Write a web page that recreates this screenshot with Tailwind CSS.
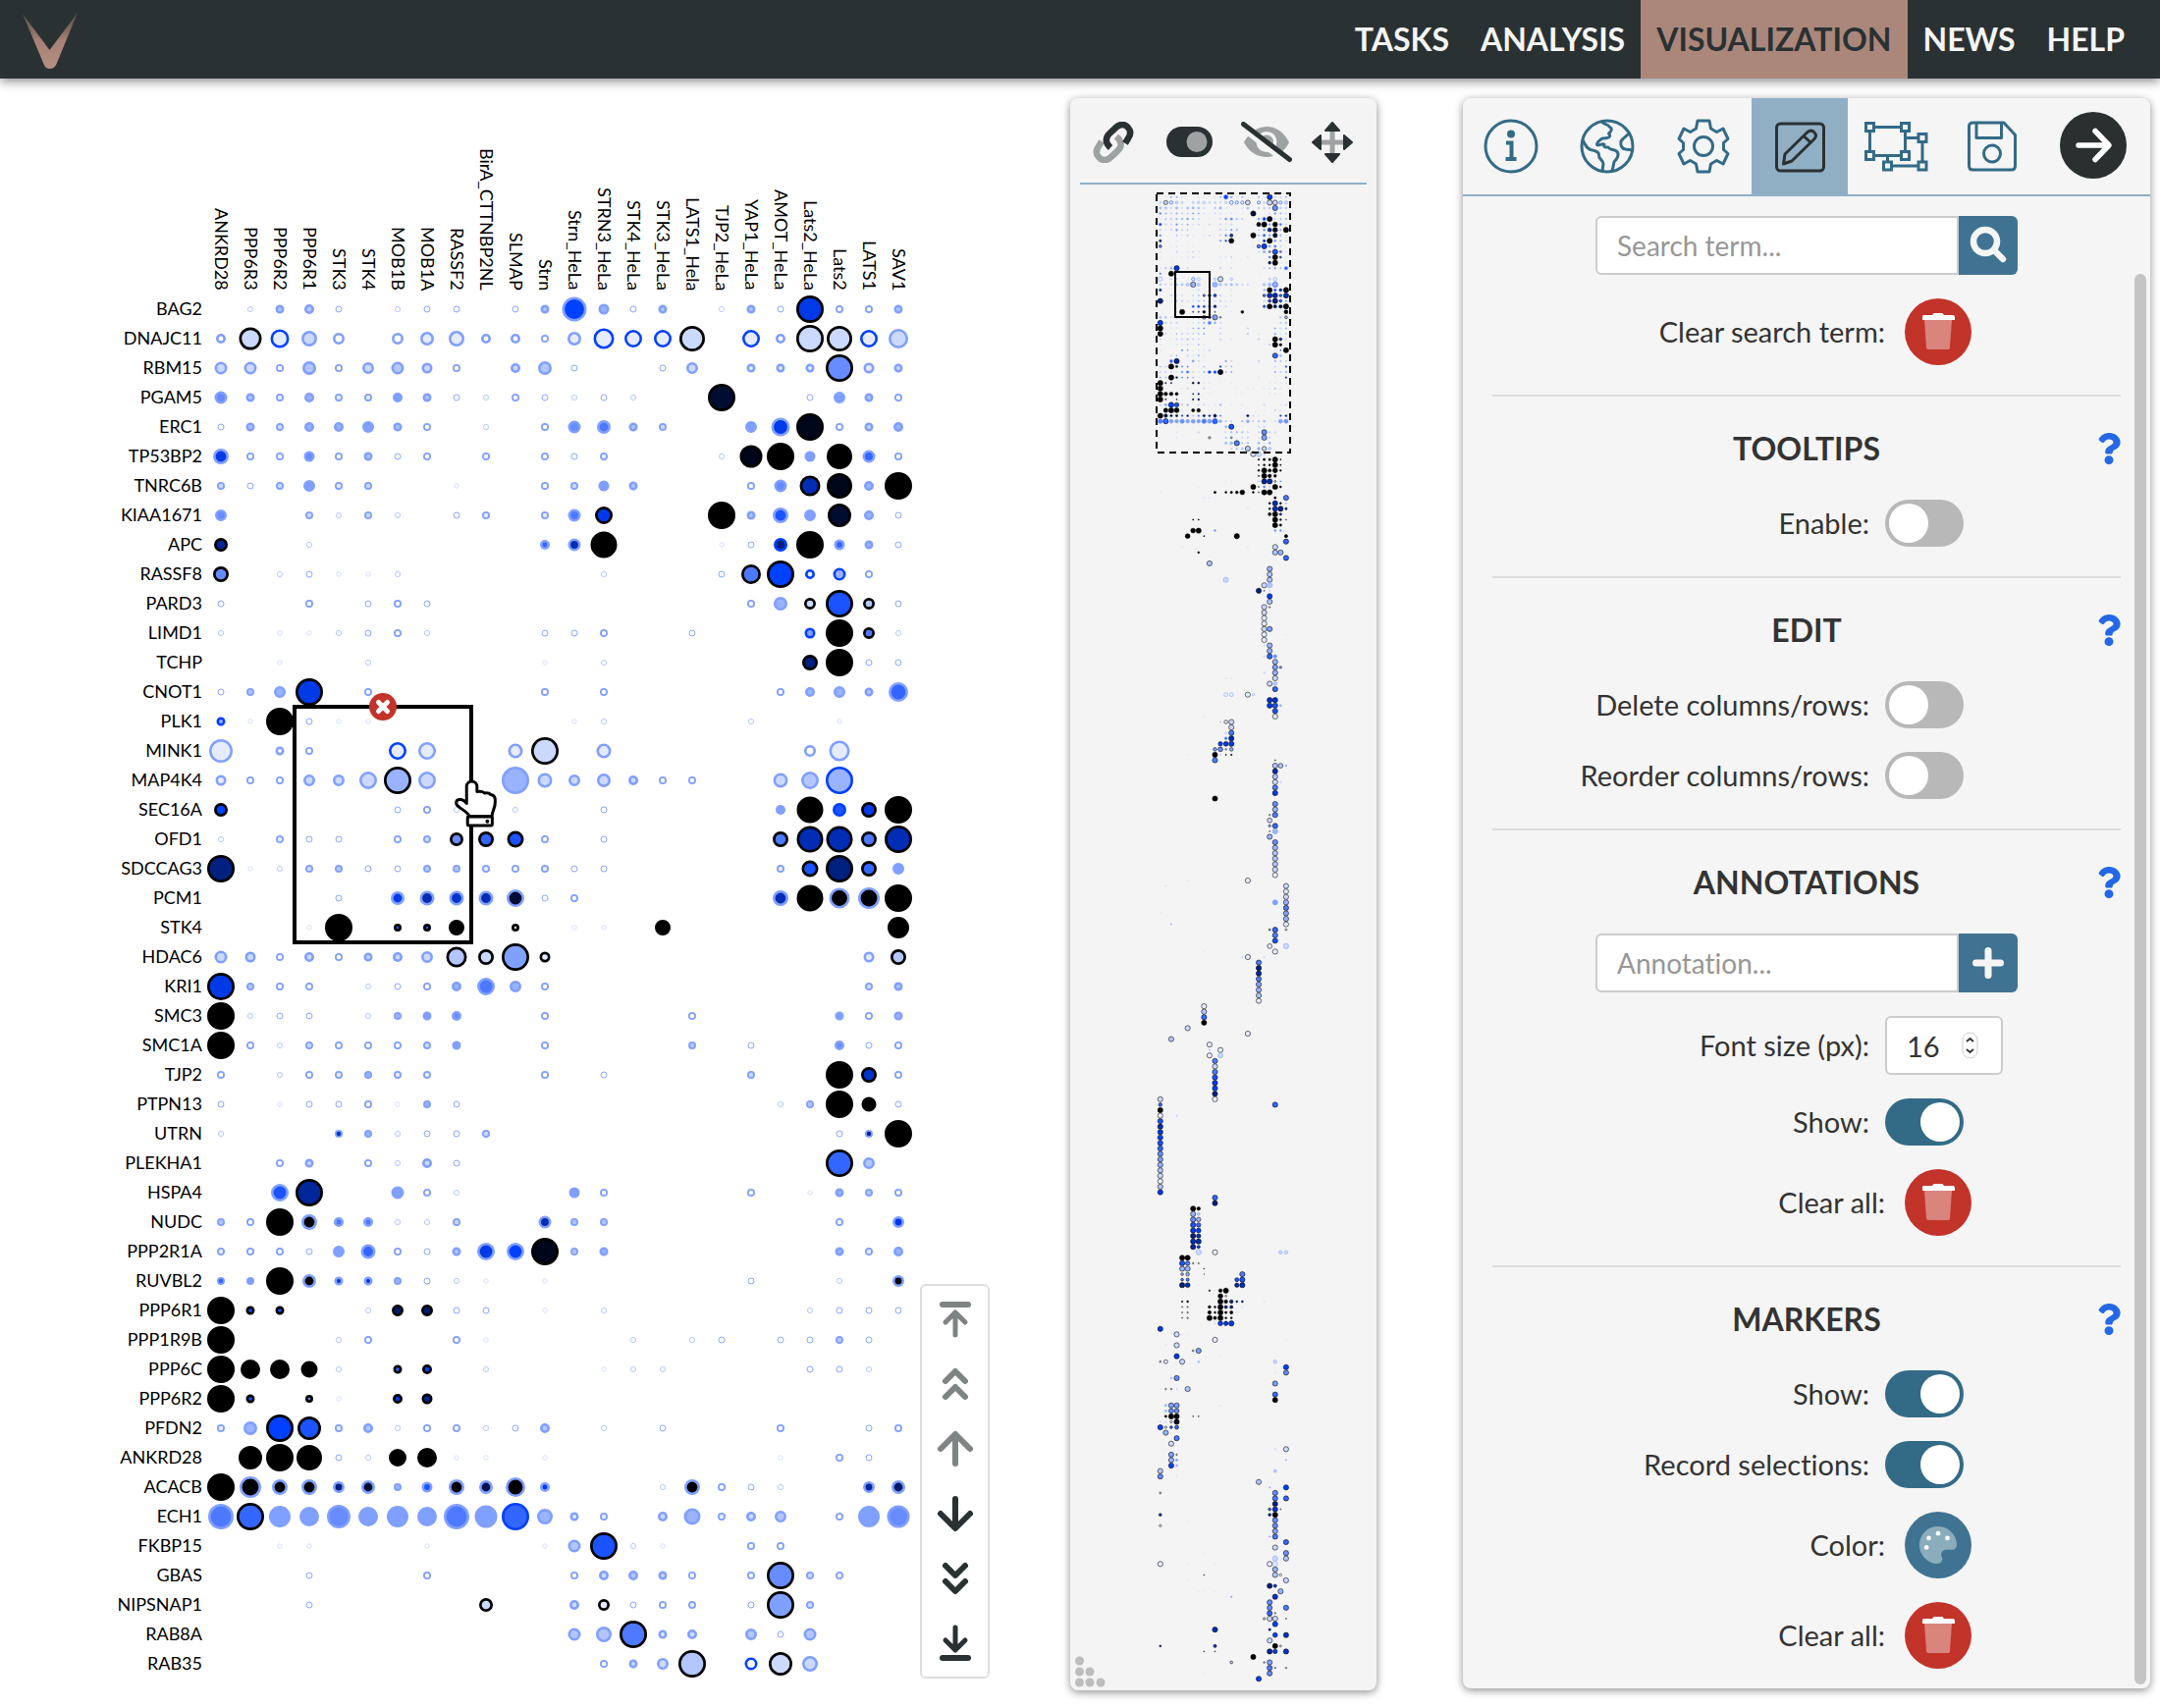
<!DOCTYPE html>
<html lang="en">
<head>
<meta charset="utf-8">
<title>Visualization</title>
<script src="https://cdn.jsdelivr.net/npm/@tailwindcss/browser@4"></script>
</head>
<body class="min-h-screen bg-white font-['Lato',sans-serif] text-[#333] [font-variant-ligatures:none]">

<header class="flex h-20 items-center justify-between bg-[#2a3132] pr-5 pl-5 shadow-[0_3px_10px_rgba(0,0,0,0.45)]">
  <a href="#" aria-label="Home" class="block">
    <svg width="62" height="60" viewBox="0 0 62 60">
      <defs><linearGradient id="lg" x1="0" y1="0" x2="0" y2="1"><stop offset="0" stop-color="#4d4a49"/><stop offset=".5" stop-color="#a78175"/><stop offset="1" stop-color="#b58f84"/></linearGradient></defs>
      <path fill="url(#lg)" d="M3 4 L30.500 41 L59 3 L38 54 Q36 60 30.500 60 Q26 60 24 54 Z"/>
    </svg>
  </a>
  <nav class="flex h-full text-[32px] font-bold text-[#f5f5f5]">
    <a href="#" class="flex items-center px-4">TASKS</a>
    <a href="#" class="flex items-center px-4">ANALYSIS</a>
    <a href="#" aria-current="page" class="flex items-center bg-[#ab877b] px-4 text-[#2a3132]">VISUALIZATION</a>
    <a href="#" class="flex items-center px-4">NEWS</a>
    <a href="#" class="flex items-center px-4">HELP</a>
  </nav>
</header>

<main class="flex items-start pt-5 pr-[10px]">

  <section aria-label="Dot plot" class="flex flex-1 items-end justify-end pr-[82px]">
    <div class="grid grid-cols-[auto_720px] gap-x-1">
      <div></div>
      <div id="cols" class="flex h-[196px] items-end pl-px text-[18px] text-black"></div>
      <div id="rows" class="pt-[3px] text-right text-[18px] leading-[30px] text-black"></div>
      <div class="relative pt-1">
        <svg id="plot" width="720" height="1410" viewBox="0 0 720 1410" class="block"></svg>
        <button aria-label="Remove marker" class="absolute top-[410px] left-[166px] size-7 rounded-full bg-[#c23329]">
          <svg viewBox="0 0 28 28" class="block size-7"><path d="M9.500 9.500 L18.500 18.500 M18.500 9.500 L9.500 18.500" stroke="#fff" stroke-width="5" stroke-linecap="round"/></svg>
        </button>
        <svg class="absolute top-[497px] left-[252px]" width="45" height="51" viewBox="0 0 136 152" fill="#fff" stroke="#000" stroke-width="9" stroke-linejoin="round">
          <path d="M40 76 V24 a16 16 0 0 1 32 0 V40 C82 38 90 40 96 44 C106 43 112 46 114 49 C124 50 129 56 128 70 C129 92 118 98 118 116 H48 C46 104 30 98 16 86 C2 76 8 62 22 64 C30 65 36 70 40 76Z"/>
          <rect x="43" y="117" width="76" height="27" rx="3"/><circle cx="104" cy="131" r="3" stroke-width="6"/>
        </svg>
      </div>
    </div>
    <div class="ml-[7px] w-[71px] rounded-md border-2 border-[#dedede] bg-white py-px text-[#2a3132]">
      <button aria-label="First page" class="flex h-[66px] w-full items-center justify-center text-[#7f8383]"><svg width="40" height="40" fill="none" stroke="currentColor" stroke-width="5" stroke-linecap="round" stroke-linejoin="round"><path stroke-width="6" d="M7 5 H33"/><path d="M10 23 L20 13 L30 23 M20 14 V36"/></svg></button>
      <button aria-label="Page up" class="flex h-[66px] w-full items-center justify-center text-[#7f8383]"><svg width="40" height="40" fill="none" stroke="currentColor" stroke-width="6" stroke-linecap="round" stroke-linejoin="round"><path d="M10 17 L20 7 L30 17 M10 33 L20 23 L30 33"/></svg></button>
      <button aria-label="Row up" class="flex h-[66px] w-full items-center justify-center text-[#7f8383]"><svg width="40" height="40" fill="none" stroke="currentColor" stroke-width="6" stroke-linecap="round" stroke-linejoin="round"><path d="M5 20 L20 5 L35 20 M20 6 V35"/></svg></button>
      <button aria-label="Row down" class="flex h-[66px] w-full items-center justify-center"><svg width="40" height="40" fill="none" stroke="currentColor" stroke-width="6" stroke-linecap="round" stroke-linejoin="round"><path d="M5 20 L20 35 L35 20 M20 5 V34"/></svg></button>
      <button aria-label="Page down" class="flex h-[66px] w-full items-center justify-center"><svg width="40" height="40" fill="none" stroke="currentColor" stroke-width="6" stroke-linecap="round" stroke-linejoin="round"><path d="M10 7 L20 17 L30 7 M10 23 L20 33 L30 23"/></svg></button>
      <button aria-label="Last page" class="flex h-[66px] w-full items-center justify-center"><svg width="40" height="40" fill="none" stroke="currentColor" stroke-width="5" stroke-linecap="round" stroke-linejoin="round"><path stroke-width="6" d="M7 35 H33"/><path d="M10 17 L20 27 L30 17 M20 4 V26"/></svg></button>
    </div>
  </section>

  <section aria-label="Minimap" class="relative w-[312px] rounded-lg bg-[#f4f4f4] px-[10px] pb-2 shadow-[0_2px_8px_rgba(0,0,0,0.45)]">
    <div class="flex h-[88px] items-center border-b-2 border-[#90afc5] px-3 pt-1">
      <button aria-label="Sync"><svg width="44" height="42" viewBox="0 0 42 42" fill="none" stroke-width="6.500" stroke-linecap="butt"><path stroke="#9ea2a2" d="M24 15 C30 20 30 26 25 30 L18 36.500 C14 40 9 40 6 36 C3 32.500 3 29 6 25 L9 20"/><path stroke="#2a3132" d="M18 26.500 C12 21 13 16 17 12 L24 5.500 C28 2 33 2 36 6 C39 9.500 39 13 36 17 L33 22"/></svg></button>
      <button aria-label="Toggle map" class="ml-8"><svg width="48" height="42" viewBox="0 0 48 42"><rect y="5" width="47" height="31" rx="15.500" fill="#2a3132"/><circle cx="31" cy="20.500" r="10.500" fill="#9ea2a2"/></svg></button>
      <button aria-label="Hide map" class="ml-7"><svg width="52" height="42" viewBox="0 0 52 42"><path fill="#9ea2a2" d="M3 21 C9 10 18 5 26 5 C36 5 44 11 49 21 C44 31 36 36 26 36 C17 36 8 31 3 21Z"/><circle cx="26" cy="20.500" r="10.500" fill="#f4f4f4"/><circle cx="26" cy="20.500" r="7" fill="#9ea2a2"/><path d="M0 6 L46 42" stroke="#f4f4f4" stroke-width="5"/><path d="M2.500 2.500 L49.500 38.500" stroke="#2a3132" stroke-width="5" stroke-linecap="round"/></svg></button>
      <button aria-label="Move map" class="ml-5"><svg width="42" height="42" viewBox="0 0 42 42"><path d="M21 8 V34 M8 21 H34" stroke="#9ea2a2" stroke-width="5"/><g fill="#2a3132" stroke="#2a3132" stroke-width="2" stroke-linejoin="round"><path d="M21 1 L28 9 H14Z"/><path d="M21 41 L28 33 H14Z"/><path d="M1 21 L9 14 V28Z"/><path d="M41 21 L33 14 V28Z"/></g></svg></button>
    </div>
    <svg id="mini" width="142" height="1526" viewBox="0 0 142 1526" class="mx-auto block"></svg>
    <svg class="absolute bottom-[3px] left-1" width="32" height="32" fill="#bdbdbd"><circle cx="5.500" cy="5" r="4.500"/><circle cx="5.500" cy="16" r="4.500"/><circle cx="16" cy="16" r="4.500"/><circle cx="5.500" cy="27" r="4.500"/><circle cx="16" cy="27" r="4.500"/><circle cx="27" cy="27" r="4.500"/></svg>
  </section>

  <section aria-label="Settings" class="relative ml-[88px] w-[700px] rounded-lg bg-[#f5f5f5] text-[29px] shadow-[0_2px_8px_rgba(0,0,0,0.45)]">
    <div class="flex h-[100px] border-b-2 border-[#90afc5] text-[#336b87]">
      <button aria-label="Information" class="flex w-[98px] items-center justify-center"><svg width="56" height="56" viewBox="0 0 56 56" fill="none" stroke="currentColor" stroke-width="3"><circle cx="28" cy="28" r="26"/><circle cx="28" cy="15.500" r="4" fill="currentColor" stroke="none"/><path stroke-width="4" d="M23 24.500 H28.500 V41 M22.500 41 H33.500"/></svg></button>
      <button aria-label="External" class="flex w-[98px] items-center justify-center"><svg width="56" height="56" viewBox="0 0 56 56" fill="none" stroke="currentColor" stroke-width="3" stroke-linejoin="round"><circle cx="28" cy="28" r="26"/><path d="M3 22 C6 26 6 30 11 31.500 C16 32.500 20 34 19.500 37 C19 41 24 42 24 46 L23 53.500"/><path d="M22.500 2 C23 6 29 5 30 8 C34 10 32 13 29.500 15 C33 19 28 20 23 20 C20 22 17 24 17.500 26.500 C20 28 22 24.500 25 26 C24 29 26 29 29 29 C31 32 34 31 37.500 33 C41 36 38 41 35 44 C34 48 34 51 32.500 53.500"/><path d="M51 14 C49 17 44 19 42 23 C41 27 43 31 47 31 C49 32 51 31 54 32"/></svg></button>
      <button aria-label="Options" class="flex w-[98px] items-center justify-center"><svg width="56" height="56" viewBox="-28 -28 56 56" fill="none" stroke="currentColor" stroke-width="3" stroke-linejoin="round"><circle r="9.500"/><path d="M-6 -26 H6 L7.500 -18 L13.500 -14.500 L20 -18 L25 -7.500 L20.500 -3.500 V3.500 L25 7.500 L20 18 L13.500 14.500 L7.500 18 L6 26 H-6 L-7.500 18 L-13.500 14.500 L-20 18 L-25 7.500 L-20.500 3.500 V-3.500 L-25 -7.500 L-20 -18 L-13.500 -14.500 L-7.500 -18Z"/></svg></button>
      <button aria-label="Edit" class="flex h-[100px] w-[98px] items-center justify-center bg-[#90afc5] text-[#2a3132]"><svg width="56" height="56" viewBox="-28 -28 56 56" fill="none" stroke="currentColor" stroke-width="3" stroke-linejoin="round"><rect x="-23.500" y="-24" width="48" height="48" rx="4"/><path d="M-16.500 17 L-15 7 L8 -15.500 Q12 -18.500 15 -15 Q18 -12 15 -8.500 L-8 14 Z M4 -11.500 L11.500 -4.500"/></svg></button>
      <button aria-label="Group" class="flex w-[98px] items-center justify-center"><svg width="66" height="56" viewBox="-33 -28 66 56" fill="none" stroke="currentColor" stroke-width="3"><path d="M-22 -19.500 H5 M-22 9.500 H5 M-26.500 -15 V5 M9.500 -15 V5 M9.500 -8.500 H22 M27 -4 V15 M-4 20 H22 M-8.500 10 V15"/><rect x="-30.500" y="-23.500" width="8" height="8"/><rect x="5.500" y="-23.500" width="8" height="8"/><rect x="-30.500" y="5.500" width="8" height="8"/><rect x="5.500" y="5.500" width="8" height="8"/><rect x="23" y="-12.500" width="8" height="8"/><rect x="23" y="16" width="8" height="8"/><rect x="-12.500" y="16" width="8" height="8"/></svg></button>
      <button aria-label="Save" class="flex w-[98px] items-center justify-center"><svg width="56" height="56" viewBox="-28 -28 56 56" fill="none" stroke="currentColor" stroke-width="3" stroke-linejoin="round"><path d="M-20 -24 H12 L23.500 -11.500 V20 Q23.500 24 19.500 24 H-19.500 Q-23.500 24 -23.500 20 V-20 Q-23.500 -24 -19.500 -24"/><path d="M-16 -24 V-8.500 H9.500 V-24"/><circle cy="7.500" r="8.500"/></svg></button>
      <div class="flex flex-1 items-center justify-center pr-1 pb-0.5"><button aria-label="Close panel" class="size-[68px] rounded-full bg-[#2a2f2f]"><svg viewBox="-34 -34 68 68" fill="none" stroke="#fff" stroke-width="5.500" stroke-linecap="round" stroke-linejoin="round"><path d="M-15 0 H15 M2 -14.500 L16 0 L2 14.500"/></svg></button></div>
    </div>

    <div class="px-[30px] pt-5 pb-5">
      <div class="space-y-6 pb-[30px]">
        <div class="mx-auto flex w-[430px]">
          <input type="text" aria-label="Search term" placeholder="Search term..." class="h-[60px] min-w-0 flex-1 rounded-l-md border-2 border-[#ccc] bg-white px-5 text-[28px] placeholder:text-[#979797]">
          <button aria-label="Search" class="size-[60px] rounded-r-md bg-[#3f7391]"><svg viewBox="0 0 60 60" fill="none" stroke="#f5f5f5" stroke-width="6.500" stroke-linecap="round"><circle cx="27" cy="26" r="12"/><path d="M36 35 L45 44"/></svg></button>
        </div>
        <div class="flex h-[68px] items-center gap-5">
          <label for="clr1" class="w-[400px] text-right">Clear search term:</label>
          <button id="clr1" class="size-[68px] rounded-full bg-[#c23329]"><svg viewBox="-34 -34 68 68" fill="#fff"><path opacity=".4" d="M-14 -12 H14 L12 16 Q12 18 10 18 H-10 Q-12 18 -12 16Z"/><path d="M-15 -17 H-6 L-4.500 -19 H4.500 L6 -17 H15 Q17 -17 17 -15 V-12 H-16 V-15 Q-16 -17 -15 -17Z"/></svg></button>
        </div>
      </div>

      <section class="border-t-2 border-[#ddd] pt-[30px] pb-[30px]">
        <div class="relative mb-[29px] flex h-[46px] items-center justify-center">
          <h2 class="text-[32px] font-bold">TOOLTIPS</h2>
          <button aria-label="Help" class="absolute right-0"><svg width="24" height="32" viewBox="0 0 384 512" fill="#2468e5"><path d="M202 0C122.200 0 70.500 32.700 29.900 91c-7.400 10.600-5.100 25.100 5.200 32.900l43.100 32.700c10.400 7.900 25.100 6 33.300-4.100 25-31.400 43.600-49.400 82.700-49.400 30.800 0 68.800 19.800 68.800 49.600 0 22.600-18.600 34.100-49 51.200-35.400 19.900-82.300 44.600-82.300 106.400V320c0 13.300 10.700 24 24 24h72.500c13.300 0 24-10.700 24-24v-5.800c0-42.900 125.300-44.600 125.300-160.600C377.500 66.300 286.900 0 202 0zM192 373.500a69.300 69.300 0 1 0 0 138.500a69.300 69.300 0 1 0 0-138.500z"/></svg></button>
        </div>
        <div class="flex h-12 items-center gap-4">
          <label for="tt" class="w-[384px] text-right">Enable:</label>
          <input id="tt" type="checkbox" role="switch" class="h-12 w-20 appearance-none rounded-full bg-[#b8b8b8] p-1 before:block before:size-10 before:rounded-full before:bg-white before:content-[''] checked:bg-[#336b87] checked:before:translate-x-8">
        </div>
      </section>

      <section class="border-t-2 border-[#ddd] pt-[30px] pb-[30px]">
        <div class="relative mb-[29px] flex h-[46px] items-center justify-center">
          <h2 class="text-[32px] font-bold">EDIT</h2>
          <button aria-label="Help" class="absolute right-0"><svg width="24" height="32" viewBox="0 0 384 512" fill="#2468e5"><path d="M202 0C122.200 0 70.500 32.700 29.900 91c-7.400 10.600-5.100 25.100 5.200 32.900l43.100 32.700c10.400 7.900 25.100 6 33.300-4.100 25-31.400 43.600-49.400 82.700-49.400 30.800 0 68.800 19.800 68.800 49.600 0 22.600-18.600 34.100-49 51.200-35.400 19.900-82.300 44.600-82.300 106.400V320c0 13.300 10.700 24 24 24h72.500c13.300 0 24-10.700 24-24v-5.800c0-42.900 125.300-44.600 125.300-160.600C377.500 66.300 286.900 0 202 0zM192 373.500a69.300 69.300 0 1 0 0 138.500a69.300 69.300 0 1 0 0-138.500z"/></svg></button>
        </div>
        <div class="space-y-6">
          <div class="flex h-12 items-center gap-4">
            <label for="del" class="w-[384px] text-right">Delete columns/rows:</label>
            <input id="del" type="checkbox" role="switch" class="h-12 w-20 appearance-none rounded-full bg-[#b8b8b8] p-1 before:block before:size-10 before:rounded-full before:bg-white before:content-[''] checked:bg-[#336b87] checked:before:translate-x-8">
          </div>
          <div class="flex h-12 items-center gap-4">
            <label for="reo" class="w-[384px] text-right">Reorder columns/rows:</label>
            <input id="reo" type="checkbox" role="switch" class="h-12 w-20 appearance-none rounded-full bg-[#b8b8b8] p-1 before:block before:size-10 before:rounded-full before:bg-white before:content-[''] checked:bg-[#336b87] checked:before:translate-x-8">
          </div>
        </div>
      </section>

      <section class="border-t-2 border-[#ddd] pt-[30px] pb-[30px]">
        <div class="relative mb-[29px] flex h-[46px] items-center justify-center">
          <h2 class="text-[32px] font-bold">ANNOTATIONS</h2>
          <button aria-label="Help" class="absolute right-0"><svg width="24" height="32" viewBox="0 0 384 512" fill="#2468e5"><path d="M202 0C122.200 0 70.500 32.700 29.900 91c-7.400 10.600-5.100 25.100 5.200 32.900l43.100 32.700c10.400 7.900 25.100 6 33.300-4.100 25-31.400 43.600-49.400 82.700-49.400 30.800 0 68.800 19.800 68.800 49.600 0 22.600-18.600 34.100-49 51.200-35.400 19.900-82.300 44.600-82.300 106.400V320c0 13.300 10.700 24 24 24h72.500c13.300 0 24-10.700 24-24v-5.800c0-42.900 125.300-44.600 125.300-160.600C377.500 66.300 286.900 0 202 0zM192 373.500a69.300 69.300 0 1 0 0 138.500a69.300 69.300 0 1 0 0-138.500z"/></svg></button>
        </div>
        <div class="space-y-6">
          <div class="mx-auto flex w-[430px]">
            <input type="text" aria-label="Annotation" placeholder="Annotation..." class="h-[60px] min-w-0 flex-1 rounded-l-md border-2 border-[#ccc] bg-white px-5 text-[28px] placeholder:text-[#979797]">
            <button aria-label="Add annotation" class="size-[60px] rounded-r-md bg-[#3f7391]"><svg viewBox="0 0 60 60" stroke="#f5f5f5" stroke-width="7" stroke-linecap="round"><path d="M17.500 30 H42.500 M30 17.500 V42.500"/></svg></button>
          </div>
          <div class="flex h-[60px] items-center gap-4">
            <label for="fs" class="w-[384px] text-right">Font size (px):</label>
            <div class="relative">
              <input id="fs" type="number" value="16" class="h-[60px] w-[120px] [appearance:textfield] rounded-md border-2 border-[#ccc] bg-white pl-5">
              <svg class="absolute top-4 left-[78px]" width="18" height="28" fill="#fff" stroke="#ccc"><rect x="1" y="1" width="15" height="26" rx="7.500"/><path fill="none" stroke="#333" stroke-width="2" d="M5 10 L8.500 7 L12 10 M5 18 L8.500 21 L12 18"/></svg>
            </div>
          </div>
          <div class="flex h-12 items-center gap-4">
            <label for="as" class="w-[384px] text-right">Show:</label>
            <input id="as" type="checkbox" role="switch" checked class="h-12 w-20 appearance-none rounded-full bg-[#b8b8b8] p-1 before:block before:size-10 before:rounded-full before:bg-white before:content-[''] checked:bg-[#336b87] checked:before:translate-x-8">
          </div>
          <div class="flex h-[68px] items-center gap-5">
            <label for="clr2" class="w-[400px] text-right">Clear all:</label>
            <button id="clr2" class="size-[68px] rounded-full bg-[#c23329]"><svg viewBox="-34 -34 68 68" fill="#fff"><path opacity=".4" d="M-14 -12 H14 L12 16 Q12 18 10 18 H-10 Q-12 18 -12 16Z"/><path d="M-15 -17 H-6 L-4.500 -19 H4.500 L6 -17 H15 Q17 -17 17 -15 V-12 H-16 V-15 Q-16 -17 -15 -17Z"/></svg></button>
          </div>
        </div>
      </section>

      <section class="border-t-2 border-[#ddd] pt-[30px]">
        <div class="relative mb-[29px] flex h-[46px] items-center justify-center">
          <h2 class="text-[32px] font-bold">MARKERS</h2>
          <button aria-label="Help" class="absolute right-0"><svg width="24" height="32" viewBox="0 0 384 512" fill="#2468e5"><path d="M202 0C122.200 0 70.500 32.700 29.900 91c-7.400 10.600-5.100 25.100 5.200 32.900l43.100 32.700c10.400 7.900 25.100 6 33.300-4.100 25-31.400 43.600-49.400 82.700-49.400 30.800 0 68.800 19.800 68.800 49.600 0 22.600-18.600 34.100-49 51.200-35.400 19.900-82.300 44.600-82.300 106.400V320c0 13.300 10.700 24 24 24h72.500c13.300 0 24-10.700 24-24v-5.800c0-42.900 125.300-44.600 125.300-160.600C377.500 66.300 286.900 0 202 0zM192 373.500a69.300 69.300 0 1 0 0 138.500a69.300 69.300 0 1 0 0-138.500z"/></svg></button>
        </div>
        <div class="space-y-6">
          <div class="flex h-12 items-center gap-4">
            <label for="ms" class="w-[384px] text-right">Show:</label>
            <input id="ms" type="checkbox" role="switch" checked class="h-12 w-20 appearance-none rounded-full bg-[#b8b8b8] p-1 before:block before:size-10 before:rounded-full before:bg-white before:content-[''] checked:bg-[#336b87] checked:before:translate-x-8">
          </div>
          <div class="flex h-12 items-center gap-4">
            <label for="rec" class="w-[384px] text-right">Record selections:</label>
            <input id="rec" type="checkbox" role="switch" checked class="h-12 w-20 appearance-none rounded-full bg-[#b8b8b8] p-1 before:block before:size-10 before:rounded-full before:bg-white before:content-[''] checked:bg-[#336b87] checked:before:translate-x-8">
          </div>
          <div class="flex h-[68px] items-center gap-5">
            <label for="col" class="w-[400px] text-right">Color:</label>
            <button id="col" class="flex size-[68px] items-center justify-center rounded-full bg-[#3f7391]"><svg width="38" height="38" viewBox="0 0 512 512"><path fill="#8aacbd" d="M204.300 5C104.900 24.400 24.800 104.300 5.200 203.400c-37 187 131.700 326.400 258.800 306.700 41.200-6.400 61.400-54.600 42.500-91.700-23.100-45.400 9.900-98.400 60.900-98.400h79.700c35.800 0 64.800-29.600 64.900-65.300C511.500 97.100 368.100-26.900 204.300 5z"/><g fill="#fff"><circle cx="96" cy="288" r="32"/><circle cx="128" cy="160" r="32"/><circle cx="256" cy="96" r="32"/><circle cx="384" cy="160" r="32"/></g></svg></button>
          </div>
          <div class="flex h-[68px] items-center gap-5">
            <label for="clr3" class="w-[400px] text-right">Clear all:</label>
            <button id="clr3" class="size-[68px] rounded-full bg-[#c23329]"><svg viewBox="-34 -34 68 68" fill="#fff"><path opacity=".4" d="M-14 -12 H14 L12 16 Q12 18 10 18 H-10 Q-12 18 -12 16Z"/><path d="M-15 -17 H-6 L-4.500 -19 H4.500 L6 -17 H15 Q17 -17 17 -15 V-12 H-16 V-15 Q-16 -17 -15 -17Z"/></svg></button>
          </div>
        </div>
      </section>
    </div>
    <div class="absolute top-[179px] right-1 bottom-1 w-3 rounded-full bg-[#c4c4c4]"></div>
  </section>
</main>

<script>
// Each dot is: column letter, edge (K = black, B = blue, none = light), diameter, "." fill level 0-20.
const columns = "ANKRD28 PPP6R3 PPP6R2 PPP6R1 STK3 STK4 MOB1B MOB1A RASSF2 BirA_CTTNBP2NL SLMAP Strn Strn_HeLa STRN3_HeLa STK4_HeLa STK3_HeLa LATS1_Hela TJP2_HeLa YAP1_HeLa AMOT_HeLa Lats2_HeLa Lats2 LATS1 SAV1".split(" ");
const rows = `BAG2 b6 c9.3 d10.3 e7 g6 h7 i7 k7 l9.3 m25.10 n11.4 o7 p9.3 r6 s9.3 t7 uK28.11 v8 w8 x9.3
DNAJC11 a10 bK23.2 cB19.1 d16.2 e12 g12 h14.1 i16.1 j10 k10 l8 m14.1 nB21.1 oB18.1 pB18.1 qK26.2 sB18.1 t10 uK28.2 vK26.2 wB18.1 x20.2
RBM15 a13.2 b13.2 c8 d14.3 e8 f12.2 g13.3 h11.2 i8 k10.2 l14.3 m7 p7 q12.2 s9.1 t9.1 u9.1 vK28.6 w11.1 x9.2
PGAM5 a13.6 b9.3 c8.1 d10.4 e8.1 f8.1 g10.5 h9.3 i7 j6 k8 l7 m6 n7 o6 rK28.18 u7 v12.5 w9.3 x8
ERC1 a7 b9.3 c8.2 d10.4 e10.4 f12.5 g9.3 h8 j6 l8 m13.6 n14.7 o9.3 p8.2 s12.5 t19.11 uK28.19 v8 w9.2 x10.4
TP53BP2 a16.11 b8 c8 d11.6 e8 f9.3 g7 h8 j8 l8 m7 n8.1 r6 sK23.19 tK28.20 u11.5 vK26.20 w13.8 x8
TNRC6B a8.2 b7 c8.2 d12.5 e8.1 f8.2 i5 l8 m8.2 n11.5 o9.3 s8 t13.6 uK21.13 vK26.19 w10.4 xK28.20
KIAA1671 a12.6 d8.2 e6 f8.2 g6 i7 j8.1 l8.1 m13.7 nK18.11 rK28.20 s9.3 t16.9 u12.5 vK24.18 w10.4 x7
APC aK14.14 d6 l10.8 m13.13 nK27.20 r5 s7 tB14.15 uK28.20 v11.8 w9.4 x7
RASSF8 aK16.6 c6 d7 e5 f5 g6 n6 r7 sK20.7 tK28.10 uB10.1 vB13.4 w8
PARD3 a7 d8 f7 g8 h7 s8 t14.4 uK12.2 vK28.9 wK12.3 x7
LIMD1 a6 c5 d5 e6 f7 g8 h6 l7 m7 n8 q7 uB11.5 vK28.20 wK12.7 x6
TCHP c5 f6 l5 n6 uK16.15 vK28.20 w7 x7
CNOT1 a7 b8.3 c12.4 dK28.11 f8 l8 n8 t8 u10.4 v12.4 w9.3 x20.8
PLK1 aB9.4 b5 cK28.20 d7 e5 f5 m5 n6 s6 v5
MINK1 a24.1 c9 d8 gB18.1 h18.1 k15.1 lK28.2 n15.1 u12 v21.1
MAP4K4 a11.1 b8 c8 d12.2 e12.2 f18.2 gK28.4 h18.2 k28.4 l15.2 m12.2 n14.2 o10.2 p8 q8 t15.2 u18.3 vB28.4
SEC16A aK14.10 g7 h8 i6 k6 n7 t10.5 uK27.20 vB14.9 wK16.11 xK28.20
OFD1 a6 c8.1 d7 e7 g8 h8.2 iK14.6 jK16.8 kK17.9 l8 n7 tK16.7 uK27.13 vK27.13 wK16.7 xK28.13
SDCCAG3 aK28.15 b5 c6 d8.2 e8.3 f7 g7 h8.3 i8.3 j8.1 k8 l8.1 m7 n7 t8.1 uK17.9 vK28.15 wK16.8 x12.5
PCM1 e7 g14.11 h15.13 i15.12 j15.13 k18.18 l7 m8 t16.13 uK27.20 v21.20 w22.20 xK28.20
STK4 d5 eK28.20 gK8.9 hK8.9 iK16.20 kK8.2 m5 n5 pK16.20 xK22.20
HDAC6 a13.2 b11.2 c8 d10.2 e8 f9.2 g10.2 h12.2 iK21.3 jK16.2 kK28.5 lK11.1 w11.1 xK16.3
KRI1 aK28.11 b8.3 c8 d8 f6 g7 h8 i10.4 j18.7 k12.4 l8 w8.2 x9.3
SMC3 aK28.20 b6 c7 d7 f6 g8.4 h9.5 i10.6 l8 q8 v9.5 w8 x9.4
SMC1A aK28.20 b8 c6 d8.2 e8 f8 g8 h8.2 i9.5 l8 q8.3 s7 v10.6 w7 x8
TJP2 a8 c6 d8 e8.1 f8.4 g8.1 h8.1 l8 n7 s8.2 vK28.20 wK16.12 x8
PTPN13 a7 c5 d7 e7 f8 g5 h8.4 i7 t6 u8.3 vK28.20 wK15.20 x7
UTRN a6 e8.12 f8.4 g6 h7 i7 j8.2 v7 w8.14 xK28.20
PLEKHA1 c8 d9.2 f8 g6 h10.2 i7 vK28.8 w12.3
HSPA4 c18.9 dK28.14 g13.5 h8 i6 m11.5 n8 s8 u5 v9.4 w8.3 x8
NUDC a8.3 b8 cK28.20 d16.20 e10.7 f10.7 g6 h6 i8.2 l13.13 m8.3 n8.3 v8 x12.11
PPP2R1A a8.1 b8 c8 d7 e12.5 f15.8 g8 h7 i9.3 j18.11 k18.10 lK28.19 m8.3 n9.4 v9.4 w8.1 x10.4
RUVBL2 a8.8 b8.5 cK28.20 d14.20 e9.12 f9.12 g8.4 h7 i6 j5 l5 s7 v6 x12.20
PPP6R1 aK28.20 bK9.9 cK9.9 f6 gK12.16 hK12.16 i7 j7 l5 n6 u6 v7 w7 x7
PPP1R9B aK28.20 e6 f8 i8 j5 o6 q6 r7 t7 u7 v8.3 w7
PPP6C aK28.20 bK20.20 cK20.20 dK17.20 e6 gK9.8 hK10.10 j6 n5 o6 p6 u7 v7 w6
PPP6R2 aK28.20 bK9.9 dK8.6 e5 gK10.11 hK11.14
PFDN2 a8.1 b14.4 cK28.10 dK24.9 e8.1 f10.3 g6 h8 i8 j6 k7 l10.3 n6 p7 t8 w7 x8
ANKRD28 bK24.20 cK28.20 dK26.20 e7 f6 gK18.20 hK20.20 i5 j5 l5 t5 v8 w7
ACACB aK28.20 b22.20 c16.20 d16.20 e12.15 f14.18 g8.4 h11.9 i16.20 j14.17 k20.20 l10.11 p6 q16.20 r8 s7 t6 w12.14 x14.16
ECH1 a26.7 bK28.8 c22.5 d20.5 e24.6 f20.5 g22.5 h20.5 i26.7 j23.5 kB28.8 l16.4 m9.1 n8.1 p10.2 q17.4 r8.1 s10.2 t12.3 v8 w22.5 x23.6
FKBP15 c5 d5 h5 l5 m13.3 nK28.9 o6 p5 s8 t8
GBAS d7 h8 m8 n10.2 o10.3 p9.2 q8 s8 tK28.6 u8.2 v8
NIPSNAP1 d7 jK14.2 m10.2 nK12.1 o7 p8 q8.1 s7 tK28.5 u8.2
RAB8A m13.3 n16.3 oK28.7 p9.1 q10.2 s12.3 t7 u13.3
RAB35 n8 o9.2 p12.2 qK28.3 sB13 tK24.2 u16.2`.split("\n").map(r => r.split(" "));

// Rows past the visible window, keyed by row number.
const rest = `47 rK28.1 s28.2 t10|48 sK10.20 tK14.20 uK14.20 vK28.20 wK8.20|49 sK8.20 tK12.20 uK12.20 vK28.20 wK9.20|50 sK12.20 tK28.20 uK18.20 vK26.20 wK11.20|51 sK8.20 tK28.20 uK20.20 vK16.20|52 s8 tK28.14 uK28.13 vK12 w8.8 m6 n6|53 rK28.20 sK8 t12.8 u8 vK28.20 wK12.20 h6|54 a7 kK14.20 mK12.20 nK14.20 oK16.20 pK26.20 q7 rK12.20 sK8 tK28.20 uK28.20 v7|55 i7 j7 vK14.18 xK28.7|56 uK12.20 vK28.13 wK12.20 x8.4|57 q7 uK12.18 vK28.13 wK28.15 xK14.12|58 uK18.20 vK28.20 wK14.12|59 gK8.20 hK8.20 vK28.20 wK12.15 xK8|60 vK28.20 wK14.20|61 gK26.20 hK28.20 k12.6 v12.6 w12.6|62 fK26.20 iK8.20 oK28.20 xK18.20|63 xK28.8|64 e7 q7 vK28.2|65 hK12.20 vK28.3 wK28.4|66 xK28.8|67 jK28.3|68 uK28.4|69 uK28.3|70 m28.2 uK28.3|71 tK28.2 u28.3|72 sK28.15 tK8 u8|73 uK28.10|74 uK28.3|75 tK28.2 uK10|76 tK28.2|77 tK28.1|78 tK28.1|79 tK28.2 uK28.5|80 tK28.1 r6 x6|81 tK28.1|82 uK28.4 t8|83 uK28.4|84 uK28.8 v20.6 t8|85 vK28.4|86 vK28.5 wK14.4|87 vK28.4 t8|88 vK28.2 m7 n7|89 uK28.2 v20.3|90 vK28.8|91 m22.1 n22.1 qK28.1 r14.1|92 uK28.12 vK28.12|93 uK28.11 vK28.9 w12.4|94 vK28.9|95 i7 vK28.1|96 l8 mK20.1 nK28.2|97 nK28.2|98 nK28.7 m12|99 m16.8 nK28.13|100 lK24.10 mK26.11 nK28.11|101 kK20.5 lK26.6 mK10.3 nK20.4|102 f6 kK28.20 l8 mK8.20 nK10.20|103 kK28.7 vK8|104 vK28.3 wK26.3 x12.3|105 vK28.13|106 vK28.3|107 vK28.2 w8|108 vK28.7|109 vK28.11|110 kK28.20|111 vK28.6|112 vK28.4|113 vK28.7 uK10|114 uK26.2|115 uK14.4 vK28.8|116 v28.4 uK8|117 uK28.4|118 vK28.6|119 vK28.4|120 vK28.3|121 vK28.3|122 vK28.3|123 vK28.2|124 vK28.1|125 qK28.1 f7|126 b7 xK28.2|127 xK28.1|128 xK28.2|129 v28.5 xK28.4|130 xK28.7|131 xK28.5 a7|132 xK28.4|133 xK28.1 c8.4|134 uK12.4 vK28.8 xK12|135 vK28.7|136 vK28.9|137 uK26.1 x28.2|138 vK28.1 i6|139 qK28.1 p8 t8|140 sK28.7|141 sK28.15|142 sK28.14|143 sK28.7|144 sK28.5|145 sK28.4|146 sK28.3|147 sK28.1|148 iK28.1|149 iK28.3|150 iK28.8|151 iK28.20|152 fK28.2|153 qK28.1|154 cK28.3|155 jK28.1|156 lK28.1 j8.3|157 jK28.1 l28.2|158 kK28.7|159 kK28.2|160 kK28.7|161 kK28.9|162 kK28.11|163 kK28.10|164 kK28.15|165 kK28.1 aK28.2|166 aK20.8 vK28.8|167 aK28.20|168 aK28.1 d8|169 aK28.9|170 aK28.13|171 aK28.11|172 aK28.10|173 aK28.9|174 aK28.8|175 aK28.6|176 aK28.5|177 aK28.4|178 aK28.3|179 aK28.2|180 aK28.1|181 aK28.3|182 aK28.11|183 kK28.8|184 kK28.15|185 gK28.20 hK20.20|186 gK28.4 h16.3|187 gK28.6 hK24.4|188 gK28.9 hK24.8|189 gK28.11 hK26.10|190 gK28.15 hK24.13|191 gK28.13 hK28.13|192 gK28.14 hK18.11|193 kK28.1 h28.2 w20.2 x20.2|194 eK28.20 fK28.20|195 eK28.9 fK24.7 gK10 hK9|196 eK28.4 fK28.4 iK8|197 eK16.3 fK20.4 pK28.7 iK6|198 eK16.7 fK18.7 oK22.9 pK28.9|199 eK28.15 fK26.13 oK24.13 pK28.13 h6|200 jK10.20 k6 lK20.20 mK28.20 e6 f6|201 lK26.20 mK12|202 eK10.20 fK12.16 lK28.20 mK20.20 nK20.15 oK12.13 pK12.12 t7|203 eK8 fK9 jK16.20 kK12.20 lK28.20 mK18.14 nK18.15 p7|204 eK8 fK10 jK20.20 kK12.20 lK28.20 mK14.20 nK18.20 o7|205 jK28.20 kK18.20 lK28.20 mK12.20 nK12.20 eK8 fK10|206 lK26.10 mK24.11 nK28.11 k8|207 aK28.11|208 dK28.2 e7 f6|209 kK28.1 x6|210 dK28.2 b7|211 gK12 hK28.5|212 dK28.11 l6|213 aK12 bK22.1 eK28.2 v20.2 h12.2|214 xK28.10|215 xK28.6 v7|216 dK28.6 c10.3|217 vK28.5|218 bK10 cK10 d8 fK28.3 a6|219 vK28.8|220 vK28.20|221 cK28.5 dK28.5 b14.3 l7|222 b14.3 cK26.6 dK26.6|223 bK14.20 cK28.20 dK28.20 gK8 hK8|224 a8 b8 cK14 dK28.19 h6|225 aK28.10 bK14 cK16.8 dK22.8|226 bK28.4|227 dK28.7|228 cK28.2|229 xK28.2 v8|230 cK28.5 dK10|231 cK28.4 d14.5 x9.3|232 cK28.10 d12.4|233 aK28.3 v16.3|234 aK28.6 d7|235 sK28.3|236 xK28.10 u9.4|237 aK12 vK28.6|238 xK28.8 vK28.7|239 vK28.15|240 uK16.8 vK28.12 wK8|241 aK16.12 uK16.13 vK28.20|242 vK28.6 f6|243 aK14 vK28.6|244 vK28.5|245 vK28.7 u9.4|246 xK28.8|247 vK28.2|248 xK28.6 i6|249 xK28.3 v28.2|250 aK28.1 uK28.1 v28.1 f6 k6|251 vK28.4|252 vK28.3 wK14 iK8|253 xK28.2 f6|254 uK28.15 vK18.12|255 wK28.4 h6 i6 k6|256 vK28.12 n9.6|257 uK28.6|258 xK28.7 uK28.6|259 uK28.8 vK10|260 tK14.1 uK28.2 vK28.2 xK8|261 vK28.10|262 kK28.13 uK14.11|263 vK26.10 xK28.12|264 uK28.2|265 aK12.14 kK18.12 vK28.20 wK12|266 uK28.14 vK24.11 xK28.12 iK8 kK8|267 rK28.20|268 nK16.3 uK28.5 t8 tK10|269 uK28.7 xK10 vK10|270 uK28.6 i6|271 sK28.10`
  .split("|").map(r => r.split(" "));

function shade(f) {
  const t = f <= 10 ? f / 10 : (f - 10) / 10;
  const c = f <= 10 ? [255 - 255 * t, 255 - 191 * t, 255] : [0, 64 * (1 - t), 255 * (1 - t)];
  return `rgb(${c.map(Math.round).join(",")})`;
}
function dot(token, row, step, k) {
  const m = token.match(/^([a-x])([KB]?)(\d+)(?:\.(\d+))?$/);
  const d = +m[3], x = (m[1].charCodeAt(0) - 97 + .5) * step, y = (row + .5) * step;
  const edge = m[2] === "K" ? "#000" : m[2] === "B" ? "#0040ff" : "#809fff";
  const sw = m[2] === "K" ? 2.7 : d >= 9 ? 2.6 : { 8: 1.8, 7: 1, 6: .8, 5: .6 }[d];
  const op = m[2] ? 1 : { 7: .9, 6: .7, 5: .5 }[d] || 1;
  return `<circle cx="${x}" cy="${y}" r="${(d - sw) / 2 * k}" fill="${shade(+(m[4] || 0))}" stroke="${edge}" stroke-width="${sw * k}" opacity="${op}"/>`;
}

document.getElementById("cols").innerHTML = columns.map(c => `<div class="flex w-[30px] shrink-0 items-end justify-center leading-[30px] [writing-mode:vertical-rl]">${c}</div>`).join("");
document.getElementById("rows").innerHTML = rows.map(r => `<div>${r[0]}</div>`).join("");
document.getElementById("plot").innerHTML =
  rows.map((r, i) => r.slice(1).map(t => dot(t, i, 30, 1)).join("")).join("") +
  '<rect x="90" y="420" width="180" height="240" fill="none" stroke="#000" stroke-width="4"/>';

const s = 5.57, k = s / 27;
document.getElementById("mini").innerHTML = `<g transform="translate(4 10)">` +
  rows.map((r, i) => r.slice(1).map(t => dot(t, i, s, k)).join("")).join("") +
  rest.map(r => r.slice(1).map(t => dot(t, +r[0], s, k)).join("")).join("") +
  '</g><rect x="3" y="9" width="136" height="264" fill="none" stroke="#000" stroke-width="2" stroke-dasharray="7 5"/>' +
  '<rect x="22" y="89" width="35" height="46" fill="none" stroke="#000" stroke-width="2"/>';
</script>
</body>
</html>
